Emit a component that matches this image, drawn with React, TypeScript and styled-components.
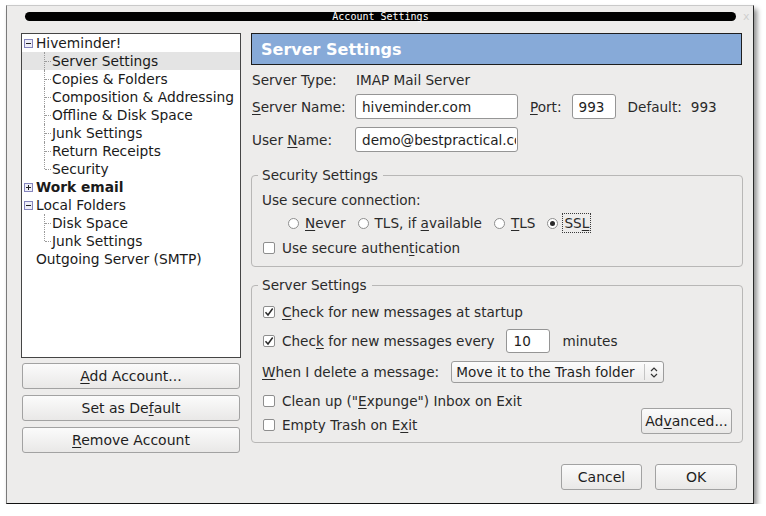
import React from 'react';
import styled, { createGlobalStyle } from 'styled-components';

const Global = createGlobalStyle`
  html, body { margin: 0; padding: 0; background: #ffffff; }
  body {
    font-family: "DejaVu Sans", "Liberation Sans", sans-serif;
    font-size: 14px;
    color: #1e1e1e;
  }
  * { box-sizing: border-box; }
  u { text-decoration-thickness: 1px; text-underline-offset: 2px; }
`;

const Window = styled.div`
  margin: 5px 0 0 6px;
  width: 748px;
  height: 499px;
  background: #edeceb;
  border: 1px solid;
  border-color: #c9c9c9 #2a2a2a #111111 #7a7a7a;
  box-shadow: 3px 4px 5px rgba(0, 0, 0, 0.45);
  display: flex;
  flex-direction: column;
`;

const TitleBar = styled.div`
  display: flex;
  align-items: center;
  padding: 6px 0 0 18px;
  height: 15px;
`;

const TitlePill = styled.div`
  width: 711px;
  height: 9px;
  border-radius: 5px;
  background: #000;
  color: #fff;
  font-family: "DejaVu Sans Mono", "Liberation Mono", monospace;
  font-size: 10px;
  line-height: 9px;
  text-align: center;
  white-space: nowrap;
`;

const CloseGlyph = styled.span`
  margin-left: 7px;
  color: #cfcfcf;
  font-size: 11px;
  line-height: 9px;
`;

const Main = styled.div`
  display: grid;
  grid-template-columns: 220px 492px;
  column-gap: 10px;
  padding-left: 14px;
  margin-top: 12px;
`;

const LeftCol = styled.div`
  display: flex;
  flex-direction: column;
`;

const Tree = styled.div`
  height: 325px;
  background: #fff;
  border: 1px solid #454545;
  display: flex;
  flex-direction: column;
  font-size: 13.8px;
`;

const TreeRow = styled.div<{ $selected?: boolean; $bold?: boolean }>`
  height: 18px;
  display: flex;
  align-items: center;
  padding-left: 2px;
  background: ${p => (p.$selected ? '#e4e4e4' : 'transparent')};
  font-weight: ${p => (p.$bold ? 'bold' : 'normal')};
  color: #1a1a1a;
  white-space: nowrap;
`;

const ExpanderSlot = styled.span`
  width: 12px;
  flex: none;
  display: flex;
  align-items: center;
`;

const Guide = styled.span<{ $last?: boolean }>`
  position: relative;
  width: 16px;
  height: 18px;
  margin-left: 12px;
  flex: none;
  &::before {
    content: '';
    position: absolute;
    left: 8px;
    top: 0;
    height: ${p => (p.$last ? '9px' : '18px')};
    border-left: 1px dotted #9a9a9a;
  }
  &::after {
    content: '';
    position: absolute;
    left: 9px;
    top: 9px;
    width: 6px;
    border-top: 1px dotted #9a9a9a;
  }
`;

const ButtonStack = styled.div`
  display: flex;
  flex-direction: column;
  gap: 6px;
  margin-top: 5px;
  padding: 0 1px;
`;

const Button = styled.button<{ $w?: number }>`
  height: 26px;
  width: ${p => (p.$w ? `${p.$w}px` : 'auto')};
  padding: 0;
  border: 1px solid #a2a2a2;
  border-radius: 3px;
  background: linear-gradient(#fbfbfb, #e9e8e7);
  font-family: inherit;
  font-size: 14px;
  color: #1e1e1e;
`;

const RightCol = styled.div`
  display: flex;
  flex-direction: column;
  font-size: 13.6px;
`;

const Header = styled.div`
  height: 32px;
  margin-right: 1px;
  background: #87aad8;
  border: 1px solid #1e1e1e;
  color: #fff;
  font-weight: bold;
  font-size: 16px;
  display: flex;
  align-items: center;
  padding-left: 9px;
`;

const FormRow = styled.div<{ $h: number; $mt: number }>`
  height: ${p => p.$h}px;
  margin-top: ${p => p.$mt}px;
  display: flex;
  align-items: center;
  padding-left: 1px;
  white-space: nowrap;
`;

const FieldLabel = styled.span`
  width: 103px;
  flex: none;
  color: #2a2a2a;
`;

const Text = styled.span<{ $ml?: number }>`
  margin-left: ${p => p.$ml ?? 0}px;
  color: #2a2a2a;
`;

const Input = styled.input<{ $w: number; $h?: number; $ml?: number }>`
  width: ${p => p.$w}px;
  height: ${p => p.$h ?? 25}px;
  margin: 0 0 0 ${p => p.$ml ?? 0}px;
  padding: 0 1px 0 6px;
  border: 1px solid #959595;
  border-radius: 3px;
  background: #fff;
  font-family: inherit;
  font-size: 13.6px;
  color: #1e1e1e;
  outline: none;
`;

const Group = styled.fieldset<{ $mt: number }>`
  margin: ${p => p.$mt}px 0 0 0;
  padding: 0 10px 0 10px;
  border: 1px solid #b8b7b6;
  border-radius: 4px;
  min-width: 0;
`;

const Legend = styled.legend`
  padding: 0 5px 0 4px;
  margin-left: -4px;
  line-height: 16px;
  color: #2a2a2a;
`;

const GroupRow = styled.div<{ $h: number; $mt: number; $pl?: number; $mb?: number }>`
  height: ${p => p.$h}px;
  margin-top: ${p => p.$mt}px;
  margin-bottom: ${p => p.$mb ?? 0}px;
  padding-left: ${p => p.$pl ?? 0}px;
  display: flex;
  align-items: center;
  white-space: nowrap;
  color: #2a2a2a;
`;

const RadioGroup = styled.div`
  display: flex;
  align-items: center;
  gap: 12px;
`;

const RadioItem = styled.span`
  display: inline-flex;
  align-items: center;
  gap: 6px;
`;

const RadioCircle = styled.span<{ $on?: boolean }>`
  width: 11px;
  height: 11px;
  flex: none;
  border-radius: 50%;
  border: 1px solid #8e8e8e;
  background: #fff;
  display: inline-flex;
  align-items: center;
  justify-content: center;
  &::after {
    content: '';
    display: ${p => (p.$on ? 'block' : 'none')};
    width: 5px;
    height: 5px;
    border-radius: 50%;
    background: #2a2a2a;
  }
`;

const FocusLabel = styled.span`
  height: 20px;
  line-height: 18px;
  margin-left: -2px;
  padding: 0 1px;
  border: 1px dotted #3a3a3a;
`;

const CheckBox = styled.span`
  width: 12px;
  height: 12px;
  flex: none;
  margin: 0 7px 0 1px;
  border: 1px solid #8e8e8e;
  border-radius: 2px;
  background: #fff;
  display: inline-flex;
  align-items: center;
  justify-content: center;
`;

const BottomArea = styled.div`
  margin-top: 9px;
  padding-bottom: 8px;
  display: flex;
  justify-content: space-between;
  align-items: flex-end;
`;

const CheckColumn = styled.div`
  display: flex;
  flex-direction: column;
  gap: 6px;
`;

const Select = styled.div`
  width: 213px;
  height: 22px;
  margin-left: 12px;
  border: 1px solid #9c9c9c;
  border-radius: 3px;
  background: linear-gradient(#fcfcfc, #ecebea);
  display: flex;
  align-items: center;
  color: #1e1e1e;
`;

const SelectText = styled.span`
  flex: 1;
  padding-left: 4px;
`;

const SelectDivider = styled.span`
  width: 1px;
  height: 16px;
  background: #c4c4c4;
`;

const SelectArrow = styled.span`
  width: 18px;
  display: flex;
  justify-content: center;
`;

const DialogButtons = styled.div`
  margin-top: 21px;
  margin-right: 6px;
  display: flex;
  justify-content: flex-end;
  gap: 13px;
`;

const Expander = ({ open }: { open: boolean }) => (
  <svg width="9" height="9" viewBox="0 0 9 9">
    <rect x="0.5" y="0.5" width="8" height="8" fill="#eeeef8" stroke="#8585bd" />
    <line x1="2" y1="4.5" x2="7" y2="4.5" stroke="#222" />
    {!open && <line x1="4.5" y1="2" x2="4.5" y2="7" stroke="#222" />}
  </svg>
);

const CheckMark = () => (
  <svg width="10" height="10" viewBox="0 0 10 10">
    <path d="M1.5 5.2 L4 8 L8.7 1.5" fill="none" stroke="#2a2a2a" strokeWidth="1.5" />
  </svg>
);

const Chevrons = () => (
  <svg width="8" height="13" viewBox="0 0 8 13">
    <path d="M1 5 L4 2 L7 5 M1 8 L4 11 L7 8" fill="none" stroke="#333" strokeWidth="1.2" />
  </svg>
);

type Node = { label: string; expander?: 'open' | 'closed'; child?: boolean; last?: boolean; selected?: boolean; bold?: boolean };

const nodes: Node[] = [
  { label: 'Hiveminder!', expander: 'open' },
  { label: 'Server Settings', child: true, selected: true },
  { label: 'Copies & Folders', child: true },
  { label: 'Composition & Addressing', child: true },
  { label: 'Offline & Disk Space', child: true },
  { label: 'Junk Settings', child: true },
  { label: 'Return Receipts', child: true },
  { label: 'Security', child: true, last: true },
  { label: 'Work email', expander: 'closed', bold: true },
  { label: 'Local Folders', expander: 'open' },
  { label: 'Disk Space', child: true },
  { label: 'Junk Settings', child: true, last: true },
  { label: 'Outgoing Server (SMTP)' },
];

export default function App() {
  return (
    <>
      <Global />
      <Window>
        <TitleBar>
          <TitlePill>Account Settings</TitlePill>
          <CloseGlyph>x</CloseGlyph>
        </TitleBar>
        <Main>
          <LeftCol>
            <Tree>
              {nodes.map((n, i) => (
                <TreeRow key={i} $selected={n.selected} $bold={n.bold}>
                  {n.child ? (
                    <Guide $last={n.last} />
                  ) : (
                    <ExpanderSlot>{n.expander && <Expander open={n.expander === 'open'} />}</ExpanderSlot>
                  )}
                  {n.label}
                </TreeRow>
              ))}
            </Tree>
            <ButtonStack>
              <Button><u>A</u>dd Account...</Button>
              <Button>Set as De<u>f</u>ault</Button>
              <Button><u>R</u>emove Account</Button>
            </ButtonStack>
          </LeftCol>

          <RightCol>
            <Header>Server Settings</Header>
            <FormRow $h={16} $mt={7}>
              <FieldLabel>Server Type:</FieldLabel>
              <Text $ml={1}>IMAP Mail Server</Text>
            </FormRow>
            <FormRow $h={25} $mt={6}>
              <FieldLabel><u>S</u>erver Name:</FieldLabel>
              <Input $w={163} defaultValue="hiveminder.com" readOnly />
              <Text $ml={12}><u>P</u>ort:</Text>
              <Input $w={44} $ml={10} defaultValue="993" readOnly />
              <Text $ml={12}>Default:</Text>
              <Text $ml={9}>993</Text>
            </FormRow>
            <FormRow $h={25} $mt={8}>
              <FieldLabel>User <u>N</u>ame:</FieldLabel>
              <Input $w={163} defaultValue="demo@bestpractical.com" readOnly />
            </FormRow>

            <Group $mt={15}>
              <Legend>Security Settings</Legend>
              <GroupRow $h={18} $mt={8}>Use secure connection:</GroupRow>
              <GroupRow $h={20} $mt={4} $pl={26}>
                <RadioGroup>
                  <RadioItem><RadioCircle /><span><u>N</u>ever</span></RadioItem>
                  <RadioItem><RadioCircle /><span>TLS, if <u>a</u>vailable</span></RadioItem>
                  <RadioItem><RadioCircle /><span><u>T</u>LS</span></RadioItem>
                  <RadioItem><RadioCircle $on /><FocusLabel>SS<u>L</u></FocusLabel></RadioItem>
                </RadioGroup>
              </GroupRow>
              <GroupRow $h={18} $mt={6} $mb={9}>
                <CheckBox />Use secure authen<u>t</u>ication
              </GroupRow>
            </Group>

            <Group $mt={10}>
              <Legend>Server Settings</Legend>
              <GroupRow $h={20} $mt={9}>
                <CheckBox><CheckMark /></CheckBox><span><u>C</u>heck for new messages at startup</span>
              </GroupRow>
              <GroupRow $h={24} $mt={7}>
                <CheckBox><CheckMark /></CheckBox><span>Chec<u>k</u> for new messages every</span>
                <Input $w={44} $h={24} $ml={12} defaultValue="10" readOnly />
                <Text $ml={12}>minutes</Text>
              </GroupRow>
              <GroupRow $h={22} $mt={8}>
                <span><u>W</u>hen I delete a message:</span>
                <Select>
                  <SelectText>Move it to the Trash folder</SelectText>
                  <SelectDivider />
                  <SelectArrow><Chevrons /></SelectArrow>
                </Select>
              </GroupRow>
              <BottomArea>
                <CheckColumn>
                  <GroupRow $h={18} $mt={0}>
                    <CheckBox />Clean up ("<u>E</u>xpunge") Inbox on Exit
                  </GroupRow>
                  <GroupRow $h={18} $mt={0}>
                    <CheckBox />Empty Trash on E<u>x</u>it
                  </GroupRow>
                </CheckColumn>
                <Button $w={91}>Ad<u>v</u>anced...</Button>
              </BottomArea>
            </Group>

            <DialogButtons>
              <Button $w={81}>Cancel</Button>
              <Button $w={82}>OK</Button>
            </DialogButtons>
          </RightCol>
        </Main>
      </Window>
    </>
  );
}
